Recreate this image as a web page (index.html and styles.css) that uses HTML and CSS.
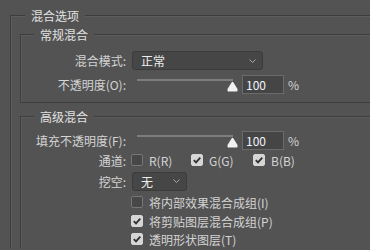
FILE: index.html
```html
<!DOCTYPE html>
<html lang="zh-CN">
<head>
    <meta charset="UTF-8">
    <title>混合选项</title>
    <link rel="stylesheet" href="styles.css">
</head>
<body>
    <fieldset class="group outer">
        <legend>混合选项</legend>

        <fieldset class="group basic">
            <legend>常规混合</legend>
            <div class="form basic-form">
                <label class="label">混合模式:</label>
                <div class="select wide">
                    <span>正常</span>
                    <svg class="chevron" width="7" height="4" viewBox="0 0 7 4"><path d="M0.5 0.5 L3.5 3.5 L6.5 0.5" /></svg>
                </div>

                <label class="label">不透明度(O):</label>
                <div class="slider-row">
                    <div class="slider">
                        <div class="track"></div>
                        <svg class="thumb" width="11" height="11" viewBox="0 0 11 11"><path d="M1.2 10.5 H9.8 Q10.5 10.5 10.5 9.8 V8 L6.3 1.3 Q5.5 0.2 4.7 1.3 L0.5 8 V9.8 Q0.5 10.5 1.2 10.5Z" /></svg>
                    </div>
                    <div class="num">100</div>
                    <span class="unit">%</span>
                </div>
            </div>
        </fieldset>

        <fieldset class="group advanced">
            <legend>高级混合</legend>
            <div class="form adv-form">
                <label class="label">填充不透明度(F):</label>
                <div class="slider-row">
                    <div class="slider">
                        <div class="track"></div>
                        <svg class="thumb" width="11" height="11" viewBox="0 0 11 11"><path d="M1.2 10.5 H9.8 Q10.5 10.5 10.5 9.8 V8 L6.3 1.3 Q5.5 0.2 4.7 1.3 L0.5 8 V9.8 Q0.5 10.5 1.2 10.5Z" /></svg>
                    </div>
                    <div class="num">100</div>
                    <span class="unit">%</span>
                </div>

                <label class="label">通道:</label>
                <div class="channels">
                    <div class="check ch-r"><span class="box"></span><span>R(R)</span></div>
                    <div class="check ch-g"><span class="box on"><svg width="12" height="12" viewBox="0 0 12 12"><path d="M2.8 6.2 L5 8.4 L9.3 3.6" /></svg></span><span>G(G)</span></div>
                    <div class="check"><span class="box on"><svg width="12" height="12" viewBox="0 0 12 12"><path d="M2.8 6.2 L5 8.4 L9.3 3.6" /></svg></span><span>B(B)</span></div>
                </div>

                <label class="label">挖空:</label>
                <div class="select narrow">
                    <span>无</span>
                    <svg class="chevron" width="7" height="4" viewBox="0 0 7 4"><path d="M0.5 0.5 L3.5 3.5 L6.5 0.5" /></svg>
                </div>

                <div class="check opt"><span class="box"></span><span>将内部效果混合成组(I)</span></div>
                <div class="check opt"><span class="box on"><svg width="12" height="12" viewBox="0 0 12 12"><path d="M2.8 6.2 L5 8.4 L9.3 3.6" /></svg></span><span>将剪贴图层混合成组(P)</span></div>
                <div class="check opt"><span class="box on"><svg width="12" height="12" viewBox="0 0 12 12"><path d="M2.8 6.2 L5 8.4 L9.3 3.6" /></svg></span><span>透明形状图层(T)</span></div>
            </div>
        </fieldset>
    </fieldset>
</body>
</html>
```

FILE: styles.css
```css
html, body {
    margin: 0;
    width: 370px;
    height: 250px;
    overflow: hidden;
}
body {
    background-color: #535353;
    color: #d4d4d4;
    font-family: "Noto Sans CJK SC", "Noto Sans", sans-serif;
    font-size: 12px;
    line-height: 15px;
}
.group {
    margin: 0;
    padding: 0;
    border: 1px solid #3d3d3d;
    border-right: none;
    box-shadow: inset 1px 1px 0 #5d5d5d;
    min-width: 0;
}
.group legend {
    padding: 0 6px;
    height: 15px;
    line-height: 15px;
    color: #e2e2e2;
    background-color: #535353;
}
.outer {
    box-sizing: border-box;
    margin: 8px 0 0 10px;
    padding: 4px 0 0 9px;
    width: 360px;
    border-bottom: none;
}
.outer > legend {
    margin-left: 5px;
}
.basic > legend,
.advanced > legend {
    margin-left: 13px;
}
.basic {
    padding: 9px 0 8px 0;
}
.advanced {
    margin-top: 6px;
    padding: 7px 0 0 0;
    border-bottom: none;
}
.form {
    display: grid;
    grid-template-columns: 105px auto;
    column-gap: 6px;
    align-items: center;
}
.basic-form {
    grid-template-rows: 19px 19px;
    row-gap: 5px;
}
.adv-form {
    grid-template-rows: 19px 20px 22px 20px 18px 18px;
}
.label {
    text-align: right;
    white-space: nowrap;
}
.select {
    display: flex;
    align-items: center;
    justify-content: space-between;
    box-sizing: border-box;
    height: 19px;
    padding: 0 6px 0 8px;
    background-color: #464646;
    border: 1px solid #3b3b3b;
    border-radius: 3px;
    color: #ececec;
}
.select.wide {
    width: 131px;
}
.select.narrow {
    width: 55px;
}
.chevron path {
    fill: none;
    stroke: #a8a8a8;
    stroke-width: 1;
}
.slider-row {
    display: flex;
    align-items: center;
}
.slider {
    position: relative;
    width: 96px;
    height: 19px;
    margin-left: 5px;
}
.track {
    margin-top: 4px;
    height: 2px;
    background-color: #7e7e7e;
}
.thumb {
    position: absolute;
    left: 90px;
    top: 6px;
}
.thumb path {
    fill: #f2f2f2;
}
.num {
    box-sizing: border-box;
    width: 42px;
    height: 19px;
    margin-left: 9px;
    padding-left: 3px;
    background-color: #454545;
    border: 1px solid #6a6a6a;
    color: #eef3ff;
    line-height: 17px;
}
.unit {
    margin-left: 4px;
}
.channels {
    display: flex;
    align-items: center;
    margin-left: -1px;
}
.check {
    display: flex;
    align-items: center;
    gap: 6px;
    white-space: nowrap;
}
.ch-r {
    width: 60px;
}
.ch-g {
    width: 62px;
}
.opt {
    grid-column: 2;
    margin-left: -1px;
}
.box {
    box-sizing: border-box;
    width: 12px;
    height: 12px;
    border: 1px solid #777777;
    border-radius: 2px;
    background-color: #474747;
    display: flex;
}
.box.on {
    border-color: #d6d6d6;
    background-color: #d6d6d6;
}
.box svg {
    margin: -1px;
}
.box path {
    fill: none;
    stroke: #303030;
    stroke-width: 1.8;
}
```
